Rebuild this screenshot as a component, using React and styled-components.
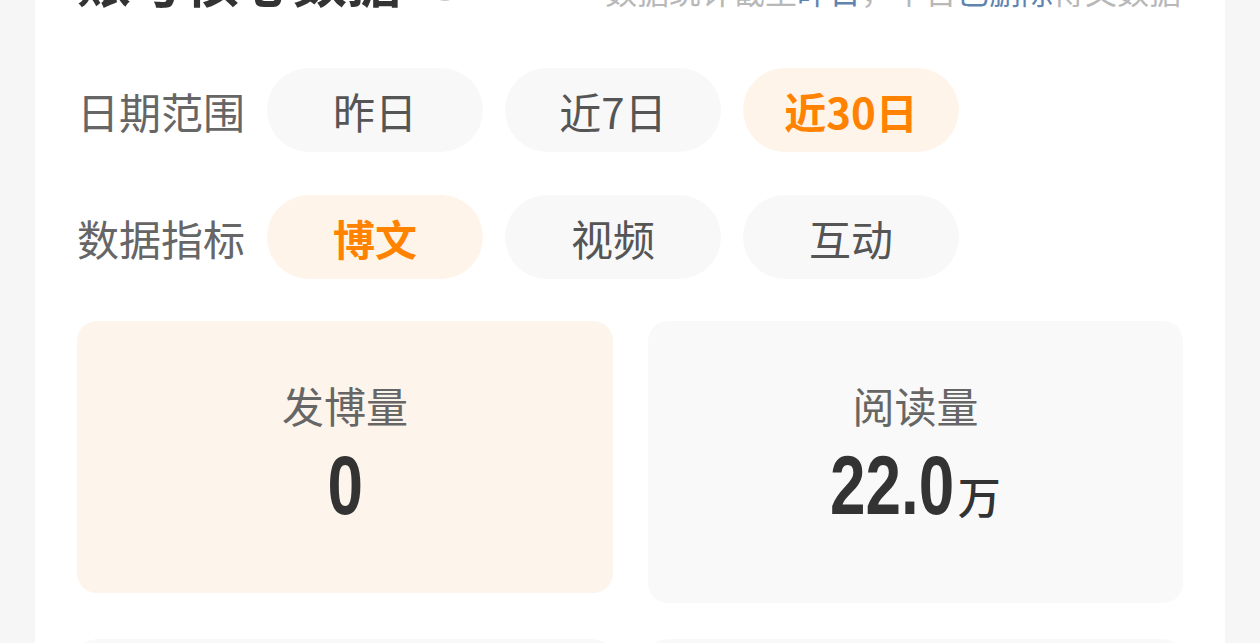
import React from 'react'
import styled, { createGlobalStyle } from 'styled-components'

const Global = createGlobalStyle`
  body {
    margin: 0;
    background: #f6f6f6;
    font-family: "Noto Sans CJK SC", "Noto Sans", sans-serif;
    overflow: hidden;
  }
`

const Page = styled.div`
  height: 643px;
  overflow: hidden;
`

const Panel = styled.div`
  margin: 0 35px;
  background: #fff;
  padding: 0 42px 40px;
  min-height: 700px;
`

const Header = styled.div`
  display: flex;
  align-items: flex-start;
  justify-content: space-between;
  height: 70px;
  margin-top: -50px;
`

const Title = styled.h2`
  margin: 0;
  font-size: 54px;
  line-height: 60px;
  font-weight: 700;
  color: #333;
  display: flex;
  align-items: center;
  gap: 30px;
`

const Help = styled.span`
  width: 24px;
  height: 24px;
  border-radius: 50%;
  border: 2px solid #c8c8c8;
  color: #c8c8c8;
  font-size: 16px;
  line-height: 24px;
  text-align: center;
  margin-top: 14px;
`

const Note = styled.span`
  font-size: 32px;
  line-height: 60px;
  color: #b8b8b8;
  margin-right: 2px;
  margin-top: 10px;
  b {
    font-weight: 400;
    color: #5f84b0;
  }
`

const FilterRow = styled.div`
  display: flex;
  align-items: center;
  gap: 22px;
  margin-top: ${p => p.$top}px;
`

const Label = styled.span`
  width: 168px;
  font-size: 42px;
  color: #666;
  white-space: nowrap;
`

const Pill = styled.button`
  width: 216px;
  height: 84px;
  border: none;
  border-radius: 42px;
  font-family: inherit;
  font-size: 42px;
  font-weight: ${p => (p.$active ? 600 : 400)};
  color: ${p => (p.$active ? '#ff8200' : '#555')};
  background: ${p => (p.$active ? '#fff4e9' : '#f8f8f8')};
  padding: 0;
`

const Grid = styled.div`
  display: grid;
  grid-template-columns: 536px 535px;
  column-gap: 35px;
  row-gap: 36px;
  align-items: start;
  margin-top: 42px;
`

const Card = styled.div`
  height: ${p => p.$h}px;
  border-radius: 20px;
  background: ${p => (p.$warm ? '#fdf4eb' : '#f9f9f9')};
  display: flex;
  flex-direction: column;
  align-items: center;
  padding-top: 62px;
  box-sizing: border-box;
`

const CardLabel = styled.span`
  font-size: 42px;
  line-height: 44px;
  color: #666;
`

const Value = styled.div`
  margin-top: 23px;
  height: 70px;
  line-height: 70px;
  display: flex;
  align-items: baseline;
  color: #333;
`

/* condensed digits: no narrow face is installed, so squeeze the bold one */
const Num = styled.span`
  display: inline-block;
  font-family: "Liberation Sans", Arial, sans-serif;
  font-weight: 700;
  font-size: 84px;
  transform: scaleX(0.76);
  transform-origin: left center;
  &:only-child {
    transform-origin: center;
  }
`

const Unit = styled.span`
  font-size: 43px;
  margin-left: -36px;
  font-weight: 500;
`

const stats = [
  { label: '发博量', value: '0', warm: true, h: 272 },
  { label: '阅读量', value: '22.0', unit: '万', h: 282 },
  { label: '转评赞', value: '0', h: 272 },
  { label: '互动率', value: '0', h: 272 },
]

export default function App() {
  return (
    <Page>
      <Global />
      <Panel>
        <Header>
          <Title>
            账号核心数据
            <Help>?</Help>
          </Title>
          <Note>
            数据统计截至<b>昨日</b>，不含<b>已删除</b>博文数据
          </Note>
        </Header>
        <FilterRow $top={48}>
          <Label>日期范围</Label>
          <Pill>昨日</Pill>
          <Pill>近7日</Pill>
          <Pill $active>近30日</Pill>
        </FilterRow>
        <FilterRow $top={43}>
          <Label>数据指标</Label>
          <Pill $active>博文</Pill>
          <Pill>视频</Pill>
          <Pill>互动</Pill>
        </FilterRow>
        <Grid>
          {stats.map(s => (
            <Card key={s.label} $warm={s.warm} $h={s.h}>
              <CardLabel>{s.label}</CardLabel>
              <Value>
                <Num>{s.value}</Num>
                {s.unit && <Unit>{s.unit}</Unit>}
              </Value>
            </Card>
          ))}
        </Grid>
      </Panel>
    </Page>
  )
}
